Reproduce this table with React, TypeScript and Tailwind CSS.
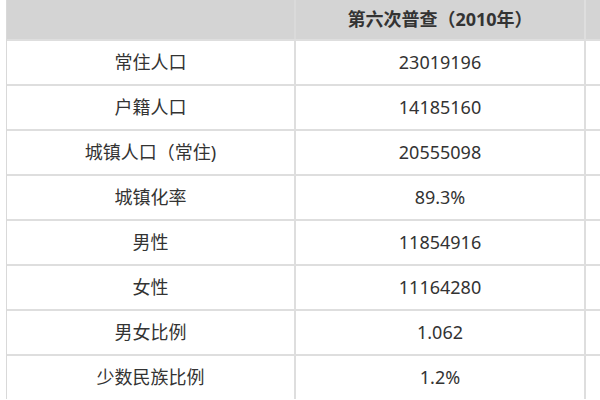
import React from "react";

const rows: [string, string][] = [
  ["常住人口", "23019196"],
  ["户籍人口", "14185160"],
  ["城镇人口（常住)", "20555098"],
  ["城镇化率", "89.3%"],
  ["男性", "11854916"],
  ["女性", "11164280"],
  ["男女比例", "1.062"],
  ["少数民族比例", "1.2%"],
];

export default function App() {
  return (
    <div
      className="w-[600px] h-[400px] overflow-hidden bg-white text-[#333] text-[18px]"
      style={{ fontFamily: '"Noto Sans", "Noto Sans CJK SC", sans-serif' }}
    >
      <div className="ml-[6px] border-l border-[#d9d9d9] grid grid-cols-[289px_290px_1fr]">
        <div className="h-[39px] bg-[#d4d4d4] border-r-2 border-[#dadada]" />
        <div className="h-[39px] bg-[#d4d4d4] border-r-2 border-[#dedede] flex items-center justify-center font-bold text-[#333]">
          第六次普查（2010年）
        </div>
        <div className="h-[39px] bg-[#d4d4d4]" />
        {rows.map(([a, b]) => (
          <React.Fragment key={a}>
            <div className="h-[45px] border-t-2 border-r-2 border-[#dedede] flex items-center justify-center">
              {a}
            </div>
            <div className="h-[45px] border-t-2 border-r-2 border-[#dedede] flex items-center justify-center">
              {b}
            </div>
            <div className="h-[45px] border-t-2 border-[#dedede]" />
          </React.Fragment>
        ))}
      </div>
    </div>
  );
}
